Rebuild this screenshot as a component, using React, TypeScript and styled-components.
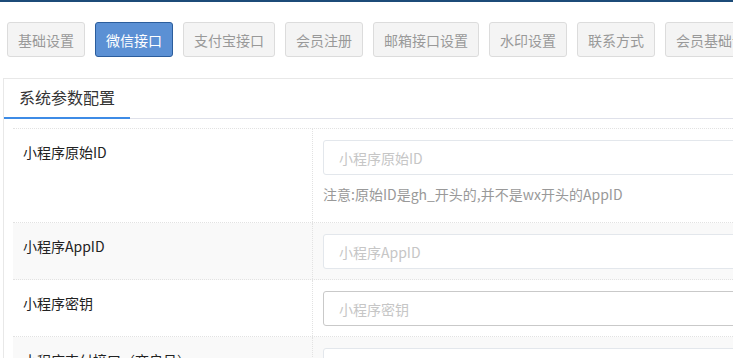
import React from 'react';
import styled, { createGlobalStyle } from 'styled-components';

const GlobalStyle = createGlobalStyle`
  html, body {
    margin: 0;
    padding: 0;
    background: #fff;
    overflow: hidden;
  }
  body {
    font-family: "Liberation Sans", "Noto Sans CJK SC", sans-serif;
    font-size: 14px;
    color: #333;
  }
`;

const Page = styled.div`
  border-top: 2px solid #1c4b78;
  width: 1100px;
`;

const Toolbar = styled.div`
  display: flex;
  gap: 10px;
  padding: 20px 7px 0;
`;

const TabButton = styled.button<{ $active?: boolean }>`
  height: 35px;
  padding: 0 10px;
  font-family: "Liberation Sans", "Noto Sans CJK SC", sans-serif;
  font-size: 14px;
  white-space: nowrap;
  border-radius: 3px;
  border: 1px solid ${(p) => (p.$active ? '#2b5d9c' : '#dcdcdc')};
  background: ${(p) => (p.$active ? '#5b90d4' : '#f4f4f4')};
  color: ${(p) => (p.$active ? '#fff' : '#999')};
  cursor: pointer;
`;

const Panel = styled.div`
  margin: 21px 0 0 3px;
  border: 1px solid #e8e8e8;
  border-right: none;
  padding: 0 9px;
`;

const PanelHeader = styled.div`
  display: flex;
  margin: 0 -9px;
  border-bottom: 1px solid #dfe1ea;
  height: 39px;
`;

const PanelTab = styled.div`
  padding: 0 15px;
  font-size: 16px;
  line-height: 39px;
  color: #333;
  border-bottom: 2px solid #3d8be6;
  margin-bottom: -1px;
`;

const Table = styled.div`
  margin-top: 9px;
  border-top: 1px dotted #e2e2e2;
`;

const Row = styled.div<{ $striped?: boolean }>`
  display: flex;
  border-bottom: 1px dotted #e2e2e2;
  background: ${(p) => (p.$striped ? '#f9f9f9' : '#fff')};
`;

const LabelCell = styled.div`
  width: 300px;
  flex: none;
  box-sizing: border-box;
  padding: 13px 10px;
  line-height: 20px;
  font-family: "Noto Sans CJK SC", sans-serif;
  font-size: 14px;
  color: #222;
  border-right: 1px dotted #e2e2e2;
`;

const ValueCell = styled.div`
  flex: 1;
  padding: 11px 10px 10px;
`;

const TextInput = styled.input<{ $focused?: boolean }>`
  display: block;
  width: 100%;
  height: 35px;
  box-sizing: border-box;
  padding: 0 15px;
  border: 1px solid ${(p) => (p.$focused ? '#c9c9c9' : '#e3e7ec')};
  border-radius: 3px;
  background: #fff;
  font-family: "Noto Sans CJK SC", sans-serif;
  font-size: 14px;
  outline: none;

  &::placeholder {
    color: #c6c6c6;
  }
`;

const Note = styled.div`
  margin: 9px 0 8px;
  line-height: 20px;
  font-family: "Noto Sans CJK SC", sans-serif;
  font-size: 14px;
  color: #999;
`;

const tabs = ['基础设置', '微信接口', '支付宝接口', '会员注册', '邮箱接口设置', '水印设置', '联系方式', '会员基础设置'];

const fields = [
  { label: '小程序原始ID', placeholder: '小程序原始ID', note: '注意:原始ID是gh_开头的,并不是wx开头的AppID' },
  { label: '小程序AppID', placeholder: '小程序AppID' },
  { label: '小程序密钥', placeholder: '小程序密钥', focused: true },
  { label: '小程序支付接口（商户号）', placeholder: '' },
];

export default function App() {
  return (
    <Page>
      <GlobalStyle />
      <Toolbar>
        {tabs.map((t) => (
          <TabButton key={t} $active={t === '微信接口'}>
            {t}
          </TabButton>
        ))}
      </Toolbar>
      <Panel>
        <PanelHeader>
          <PanelTab>系统参数配置</PanelTab>
        </PanelHeader>
        <Table>
          {fields.map((f, i) => (
            <Row key={f.label} $striped={i % 2 === 1}>
              <LabelCell>{f.label}</LabelCell>
              <ValueCell>
                <TextInput placeholder={f.placeholder} $focused={f.focused} />
                {f.note && <Note>{f.note}</Note>}
              </ValueCell>
            </Row>
          ))}
        </Table>
      </Panel>
    </Page>
  );
}
